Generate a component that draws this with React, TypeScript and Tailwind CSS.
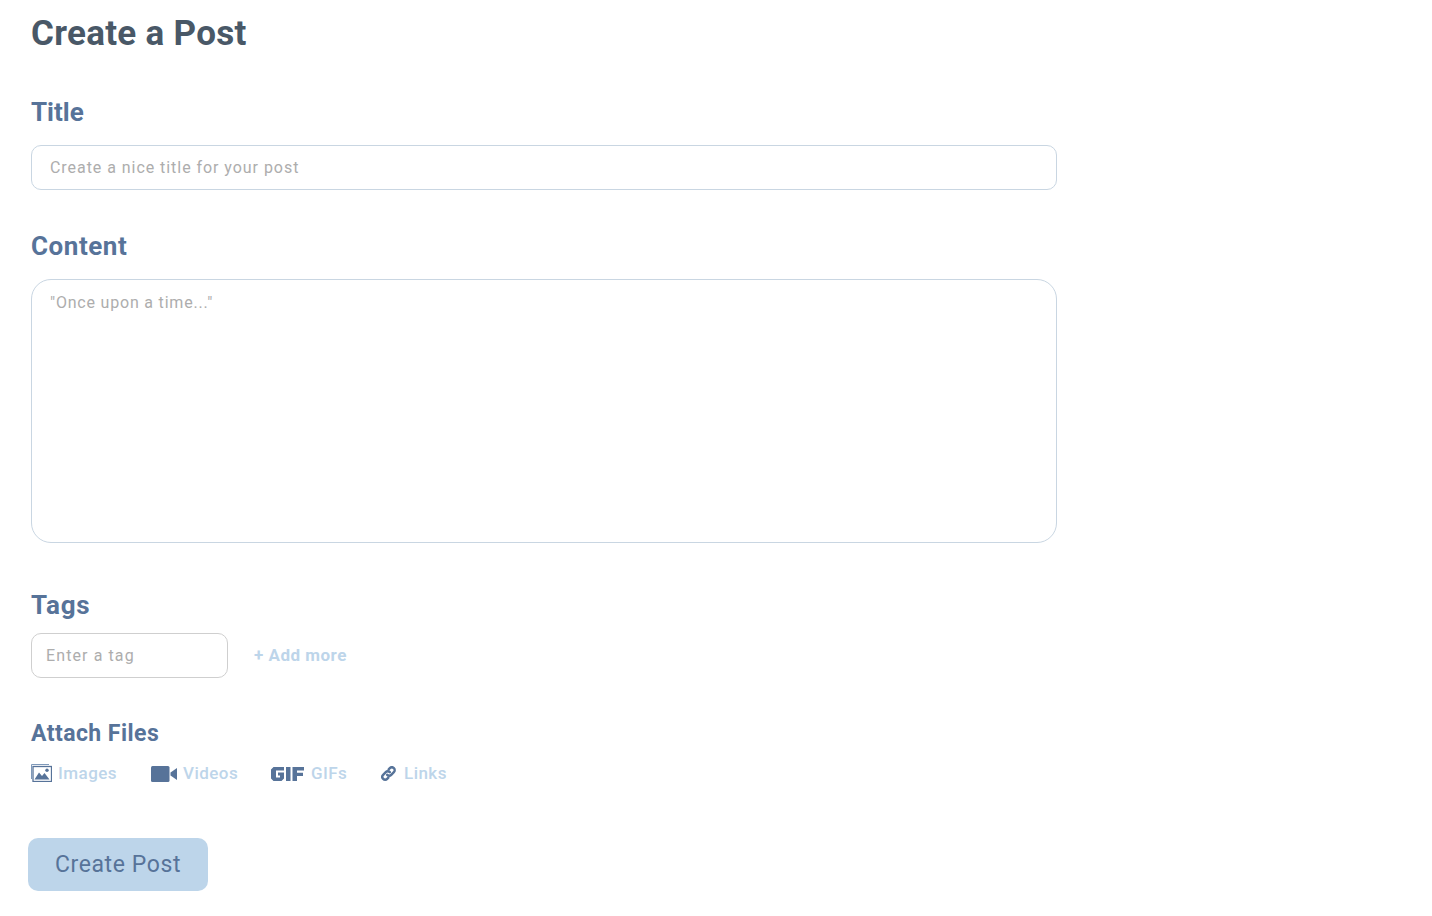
const font = "font-['Roboto',sans-serif]";

function ImagesIcon() {
  return (
    <svg viewBox="0 0 21 18" className="mb-[2px] h-[18px] w-[21px]" fill="none">
      <path d="M0.5 15V0.5H18" stroke="#7f99b9" strokeWidth="1" />
      <rect x="2" y="2.500" width="18.500" height="15" stroke="#577399" strokeWidth="1.300" />
      <path d="M3.500 15.500l4.500-7 3 3.500 2.500-3 5 6.500z" fill="#577399" />
      <circle cx="16" cy="6.200" r="1.700" fill="#577399" />
    </svg>
  );
}

function VideoIcon() {
  return (
    <svg viewBox="0 0 26 16" className="mb-[1px] h-[16px] w-[26px]" fill="#577399">
      <rect x="0" y="0" width="18.500" height="16" rx="1.500" />
      <path d="M19.500 6.500L26 2v12l-6.500-4.500z" />
    </svg>
  );
}

function GifIcon() {
  return (
    <svg viewBox="0 0 33 14" className="mb-[1px] h-[14px] w-[33px]" fill="#577399">
      <path d="M2.500 0H13v3.500H5v7h4V8.500H7V5.500h6V11.500L10.500 14H2.500L0 11.500V2.500z" />
      <rect x="15" y="0" width="4.500" height="14" />
      <path d="M21.500 0H33v3.500h-7V5.700h6v3.300h-6V14h-4.500z" />
    </svg>
  );
}

function LinkIcon() {
  return (
    <svg viewBox="0 0 16 16" className="mb-[2px] h-[15px] w-[15px]" fill="none" stroke="#577399" strokeWidth="2.600" strokeLinecap="round">
      <path d="M6.600 9.400a3 3 0 0 0 4.300 0l2.800-2.800a3 3 0 0 0-4.300-4.300L8.200 3.500" />
      <path d="M9.400 6.600a3 3 0 0 0-4.300 0L2.300 9.400a3 3 0 0 0 4.300 4.300l1.200-1.200" />
    </svg>
  );
}

export default function App() {
  return (
    <div className={`${font} h-[916px] w-[1432px] bg-white pl-[31px]`}>
      <h1 className="pt-[14px] text-[35px] font-bold leading-[40px] tracking-[0.3px] text-[#495867]">
        Create a Post
      </h1>

      <h2 className="mt-[43px] text-[26px] font-bold leading-[30px] text-[#577399]">Title</h2>
      <input
        className="mt-[18px] block h-[45px] w-[1026px] rounded-[10px] border border-[#c9d6e2] px-[18px] text-[16px] tracking-[0.95px] outline-none placeholder:text-[#adadad]"
        placeholder="Create a nice title for your post"
      />

      <h2 className="mt-[41px] text-[26px] font-bold leading-[30px] tracking-[0.55px] text-[#577399]">Content</h2>
      <textarea
        className="mt-[18px] block h-[264px] w-[1026px] resize-none rounded-[20px] border border-[#c9d6e2] px-[18px] py-[13px] text-[16px] leading-[20px] tracking-[0.8px] outline-none placeholder:text-[#adadad]"
        placeholder={'"Once upon a time..."'}
      />

      <h2 className="mt-[47px] text-[26px] font-bold leading-[30px] tracking-[0.8px] text-[#577399]">Tags</h2>
      <div className="mt-[13px] flex items-center gap-[26px]">
        <input
          className="block h-[45px] w-[197px] rounded-[10px] border border-[#cfcfcf] px-[14px] text-[16px] tracking-[1.1px] outline-none placeholder:text-[#adadad]"
          placeholder="Enter a tag"
        />
        <span className="text-[17px] font-bold tracking-[0.5px] text-[#bdd5ea]">+ Add more</span>
      </div>

      <h3 className="mt-[42px] text-[23px] font-bold leading-[28px] tracking-[0.45px] text-[#577399]">Attach Files</h3>
      <div className="mt-[12px] flex h-[28px] items-center text-[17px] font-medium tracking-[0.45px] text-[#bdd5ea]">
        <div className="flex w-[120px] items-center gap-[6px]">
          <ImagesIcon />
          <span>Images</span>
        </div>
        <div className="flex w-[120px] items-center gap-[6px]">
          <VideoIcon />
          <span>Videos</span>
        </div>
        <div className="flex w-[110px] items-center gap-[7px]">
          <GifIcon />
          <span>GIFs</span>
        </div>
        <div className="flex items-center gap-[8px]">
          <LinkIcon />
          <span>Links</span>
        </div>
      </div>

      <button
        type="button"
        className="-ml-[3px] mt-[50px] block h-[53px] w-[180px] rounded-[10px] bg-[#bdd5ea] pt-[1px] text-[23px] tracking-[0.6px] text-[#577399]"
      >
        Create Post
      </button>
    </div>
  );
}
